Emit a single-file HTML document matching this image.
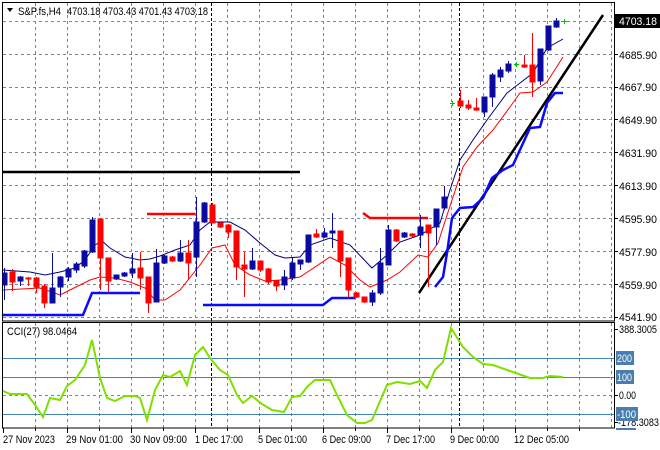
<!DOCTYPE html>
<html><head><meta charset="utf-8"><style>
html,body{margin:0;padding:0;background:#fff;}
svg{display:block;font-family:"Liberation Sans",sans-serif;font-size:11px;}
</style></head><body>
<svg width="660" height="450" viewBox="0 0 660 450" xmlns="http://www.w3.org/2000/svg">
<rect width="660" height="450" fill="#fff"/>
<g stroke="#778899" stroke-width="1" stroke-dasharray="3,3" fill="none">
<path d="M3 21.5H614M3 54.5H614M3 87.5H614M3 119.5H614M3 152.5H614M3 185.5H614M3 218.5H614M3 251.5H614M3 284.5H614M3 317.5H614"/>
<path d="M35.5 3V321M67.5 3V321M99.5 3V321M131.5 3V321M163.5 3V321M195.5 3V321M227.5 3V321M259.5 3V321M291.5 3V321M323.5 3V321M355.5 3V321M387.5 3V321M419.5 3V321M451.5 3V321M483.5 3V321M515.5 3V321M547.5 3V321M579.5 3V321M611.5 3V321"/>
<path d="M35.5 323V428M67.5 323V428M99.5 323V428M131.5 323V428M163.5 323V428M195.5 323V428M227.5 323V428M259.5 323V428M291.5 323V428M323.5 323V428M355.5 323V428M387.5 323V428M419.5 323V428M451.5 323V428M483.5 323V428M515.5 323V428M547.5 323V428M579.5 323V428M611.5 323V428"/>
<path d="M3 395.5H614"/>
</g>
<g stroke="#000" stroke-dasharray="3,2"><path d="M211.5 3V428M459.5 3V428"/></g>
<g stroke="#4682b4"><path d="M3 358.5H614M3 377.5H614M3 414.5H614"/></g>
<g stroke="#000" fill="none">
<rect x="2.5" y="2.5" width="612" height="318.5"/>
<rect x="2.5" y="322.5" width="612" height="105.5"/>
<path d="M614 54.5h4M614 87.5h4M614 119.5h4M614 152.5h4M614 185.5h4M614 218.5h4M614 251.5h4M614 284.5h4M614 317.5h4M614 329.5h4M614 395.5h4M614 422.5h4"/>
<path d="M67.5 428v5M131.5 428v5M195.5 428v5M259.5 428v5M323.5 428v5M387.5 428v5M451.5 428v5M515.5 428v5M579.5 428v3M35.5 428v3M99.5 428v3M163.5 428v3M227.5 428v3M291.5 428v3M355.5 428v3M419.5 428v3M483.5 428v3M547.5 428v3M3.5 428v5"/>
</g>
<path d="M3 172H300" stroke="#000" stroke-width="2.5"/>
<path d="M419 293L603 15" stroke="#000" stroke-width="2.5"/>
<path d="M147 214H195M363 213L370 218H428" stroke="#ff0000" stroke-width="2.5" fill="none"/>
<path d="M3 315H83L92 293H140M203 305H323L332 298H355M435 287L443 277L447 253L452 218L460 208L473 207L483 198L492 178L503 170L513 165L530 128L540 127L547 103L555 93H563" stroke="#0a0aff" stroke-width="2.5" fill="none"/>
<path d="M3 270L30 272L45 275L60 272L75 268L85 260L95 245L102 241L110 248L125 257L140 260L150 259L160 256L175 250L190 245L200 230L210 222L230 222L245 230L260 243L275 255L285 258L300 257L310 245L330 238L350 245L372 268L387 255L400 242L420 235L440 223L450 190L460 160L473 140L487 120L507 93L520 83L533 73L547 48L563 39" stroke="#000080" stroke-width="1" fill="none"/>
<path d="M3 290L40 288L60 295L70 290L90 280L100 277L115 278L130 282L145 288L155 300L165 300L180 290L200 265L212 248L225 245L235 265L250 275L265 281L280 280L300 277L330 257L345 265L360 280L370 287L387 280L400 272L418 255L428 257L438 243L452 200L463 167L477 147L493 130L510 107L520 93L533 92L547 82L563 57" stroke="#ff0000" stroke-width="1" fill="none"/>
<g stroke="#ff0000" fill="#ff0000">
<path d="M12.5 269V291M28.5 277V286M36.5 277V293M44.5 284V308M100.5 219V290M108.5 258V292M140.5 252V290M148.5 277V313M172.5 256V262M188.5 240V280M212.5 203V223M220.5 222V228M228.5 224V238M236.5 231V280M244.5 252V297M260.5 261V272M268.5 268V284M276.5 280V291M316.5 229V238M340.5 231V277M348.5 258V297M356.5 292V298M364.5 297V303M396.5 229V242M412.5 233V237M428.5 225V287M460.5 90V108M468.5 100V110M476.5 98V111M524.5 55V68M532.5 33V97"/>
<rect x="10" y="272" width="5" height="10"/><rect x="26" y="278" width="5" height="1"/><rect x="34" y="278" width="5" height="9"/><rect x="42" y="286" width="5" height="17"/>
<rect x="98" y="219" width="5" height="39"/><rect x="106" y="258" width="5" height="23"/><rect x="138" y="268" width="5" height="10"/><rect x="146" y="277" width="5" height="26"/>
<rect x="170" y="257" width="5" height="4"/><rect x="186" y="253" width="5" height="10"/><rect x="210" y="205" width="5" height="18"/><rect x="218" y="223" width="5" height="4"/>
<rect x="226" y="225" width="5" height="7"/><rect x="234" y="231" width="5" height="36"/><rect x="242" y="265" width="5" height="4"/><rect x="258" y="261" width="5" height="9"/>
<rect x="266" y="269" width="5" height="13"/><rect x="274" y="281" width="5" height="5"/><rect x="314" y="234" width="5" height="3"/><rect x="338" y="231" width="5" height="30"/>
<rect x="346" y="258" width="5" height="32"/><rect x="354" y="293" width="5" height="4"/><rect x="362" y="297" width="5" height="5"/><rect x="394" y="230" width="5" height="11"/>
<rect x="410" y="234" width="5" height="2"/><rect x="426" y="225" width="5" height="8"/><rect x="458" y="101" width="5" height="5"/><rect x="466" y="105" width="5" height="3"/>
<rect x="474" y="108" width="5" height="2"/><rect x="522" y="65" width="5" height="2"/><rect x="530" y="65" width="5" height="17"/>
</g>
<g stroke="#0a0aa0" fill="#0a0aa0">
<path d="M4.5 268V300M20.5 276V286M52.5 253V303M60.5 276V297M68.5 267V281M76.5 262V273M84.5 250V268M92.5 217V253M116.5 275V280M124.5 272V277M132.5 253V278M156.5 249V302M164.5 255V264M180.5 240V262M196.5 197V277M204.5 202V223M252.5 248V270M284.5 270V290M292.5 257V280M300.5 260V270M308.5 235V263M324.5 228V238M332.5 213V248M372.5 290V306M380.5 248V295M388.5 225V265M404.5 232V238M420.5 215V248M436.5 210V245M444.5 186V210M484.5 97V117M492.5 73V107M500.5 67V82M508.5 61V73M540.5 49V85M548.5 26V51M556.5 18V28"/>
<rect x="3" y="273" width="4" height="12"/><rect x="18" y="277" width="5" height="4"/><rect x="50" y="288" width="5" height="15"/><rect x="58" y="277" width="5" height="10"/>
<rect x="66" y="269" width="5" height="8"/><rect x="74" y="264" width="5" height="6"/><rect x="82" y="251" width="5" height="15"/><rect x="90" y="220" width="5" height="32"/>
<rect x="114" y="275" width="5" height="4"/><rect x="122" y="273" width="5" height="3"/><rect x="130" y="269" width="5" height="4"/><rect x="154" y="263" width="5" height="39"/>
<rect x="162" y="256" width="5" height="7"/><rect x="178" y="253" width="5" height="8"/><rect x="194" y="222" width="5" height="35"/><rect x="202" y="203" width="5" height="19"/>
<rect x="250" y="261" width="5" height="8"/><rect x="282" y="277" width="5" height="8"/><rect x="290" y="263" width="5" height="15"/><rect x="298" y="260" width="5" height="4"/>
<rect x="306" y="235" width="5" height="27"/><rect x="322" y="233" width="5" height="4"/><rect x="330" y="231" width="5" height="2"/><rect x="370" y="293" width="5" height="9"/>
<rect x="378" y="263" width="5" height="30"/><rect x="386" y="230" width="5" height="35"/><rect x="402" y="233" width="5" height="4"/><rect x="418" y="227" width="5" height="8"/>
<rect x="434" y="209" width="5" height="18"/><rect x="442" y="197" width="5" height="11"/><rect x="482" y="97" width="5" height="15"/><rect x="490" y="75" width="5" height="22"/>
<rect x="498" y="70" width="5" height="7"/><rect x="506" y="64" width="5" height="7"/><rect x="538" y="49" width="5" height="32"/><rect x="546" y="26" width="5" height="24"/><rect x="554" y="21" width="5" height="6"/>
</g>
<path d="M450 103.5h5M452.5 101v5M514 64.5h5M516.5 62v5M562 21.5h5M564.5 19v5" stroke="#00c000"/>
<path d="M3 391L10 394L27 394L35 405L43 417L50 398L60 400L67 386L75 380L85 365L92 340L100 378L107 398L115 401L125 396L135 396L140 398L147 420L155 390L163 375L170 377L180 371L187 385L195 355L203 347L210 358L220 370L228 375L237 395L243 403L252 396L262 404L272 410L284 412L292 397L300 396L308 386L315 380L330 380L337 395L347 415L357 423L365 423L372 420L387 385L397 382L410 384L420 381L427 388L435 370L443 362L451 328L463 347L473 357L483 364L493 365L510 371L530 378L543 378L550 376L563 377" stroke="#7fe000" stroke-width="2" fill="none"/>
<path d="M7 8h6l-3 4z" fill="#000"/>
<text x="18" y="15" fill="#000" textLength="43" lengthAdjust="spacingAndGlyphs">S&amp;P.fs,H4</text>
<text x="67" y="15" fill="#000" textLength="141" lengthAdjust="spacingAndGlyphs">4703.18 4703.43 4701.43 4703.18</text>
<text x="7" y="335" fill="#000" textLength="70" lengthAdjust="spacingAndGlyphs">CCI(27) 98.0464</text>
<rect x="615" y="14" width="45" height="14" fill="#000"/>
<text x="619" y="25" fill="#fff" textLength="38" lengthAdjust="spacingAndGlyphs">4703.18</text>
<g fill="#000">
<text x="619" y="59" textLength="38" lengthAdjust="spacingAndGlyphs">4685.90</text><text x="619" y="91" textLength="38" lengthAdjust="spacingAndGlyphs">4667.90</text><text x="619" y="124" textLength="38" lengthAdjust="spacingAndGlyphs">4649.90</text>
<text x="619" y="157" textLength="38" lengthAdjust="spacingAndGlyphs">4631.90</text><text x="619" y="190" textLength="38" lengthAdjust="spacingAndGlyphs">4613.90</text><text x="619" y="223" textLength="38" lengthAdjust="spacingAndGlyphs">4595.90</text>
<text x="619" y="256" textLength="38" lengthAdjust="spacingAndGlyphs">4577.90</text><text x="619" y="289" textLength="38" lengthAdjust="spacingAndGlyphs">4559.90</text><text x="619" y="321" textLength="38" lengthAdjust="spacingAndGlyphs">4541.90</text>
<text x="619" y="333" textLength="38" lengthAdjust="spacingAndGlyphs">388.3005</text><text x="619" y="399" textLength="17" lengthAdjust="spacingAndGlyphs">0.00</text><text x="618" y="426" textLength="41" lengthAdjust="spacingAndGlyphs">-178.3083</text>
</g>
<g fill="#4a7eb0"><rect x="616" y="351" width="18" height="14"/><rect x="616" y="370" width="18" height="14"/><rect x="616" y="407" width="22" height="14"/><rect x="616" y="428" width="20" height="2"/></g>
<g fill="#fff"><text x="617" y="362" textLength="15" lengthAdjust="spacingAndGlyphs">200</text><text x="617" y="381" textLength="15" lengthAdjust="spacingAndGlyphs">100</text><text x="617" y="418" textLength="19" lengthAdjust="spacingAndGlyphs">-100</text></g>
<g fill="#000">
<text x="3" y="443" textLength="52" lengthAdjust="spacingAndGlyphs">27 Nov 2023</text><text x="66" y="443" textLength="57" lengthAdjust="spacingAndGlyphs">29 Nov 01:00</text><text x="130" y="443" textLength="57" lengthAdjust="spacingAndGlyphs">30 Nov 09:00</text>
<text x="195" y="443" textLength="48" lengthAdjust="spacingAndGlyphs">1 Dec 17:00</text><text x="258" y="443" textLength="49" lengthAdjust="spacingAndGlyphs">5 Dec 01:00</text><text x="322" y="443" textLength="49" lengthAdjust="spacingAndGlyphs">6 Dec 09:00</text>
<text x="386" y="443" textLength="49" lengthAdjust="spacingAndGlyphs">7 Dec 17:00</text><text x="450" y="443" textLength="49" lengthAdjust="spacingAndGlyphs">9 Dec 00:00</text><text x="514" y="443" textLength="55" lengthAdjust="spacingAndGlyphs">12 Dec 05:00</text>
</g>
</svg>
</body></html>
